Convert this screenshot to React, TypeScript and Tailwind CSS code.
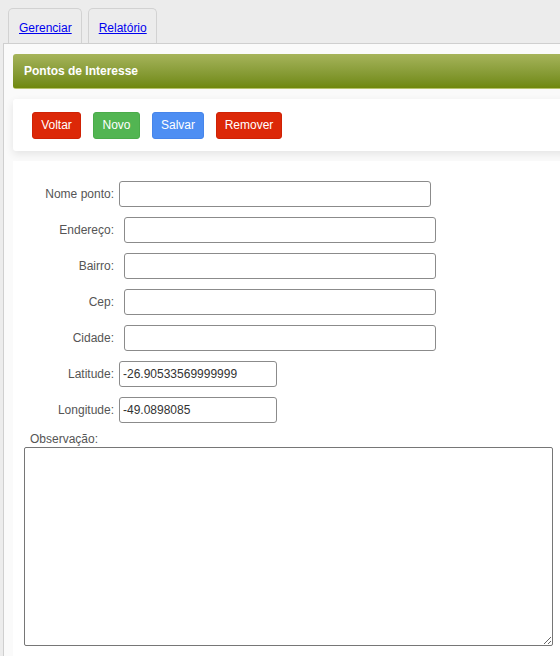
import React from "react";

type Field = { label: string; gap: "near" | "far"; width: number; value?: string };

const fields: Field[] = [
  { label: "Nome ponto:", gap: "near", width: 312 },
  { label: "Endereço:", gap: "far", width: 312 },
  { label: "Bairro:", gap: "far", width: 312 },
  { label: "Cep:", gap: "far", width: 312 },
  { label: "Cidade:", gap: "far", width: 312 },
  { label: "Latitude:", gap: "near", width: 158, value: "-26.90533569999999" },
  { label: "Longitude:", gap: "near", width: 158, value: "-49.0898085" },
];

function Tab({ children }: { children: React.ReactNode }) {
  return (
    <div className="h-[35px] border border-b-0 border-[#d2d2d2] rounded-t-[5px] pl-[10px] pr-[9px] pt-[10px] bg-[#ececec]">
      <a href="#" className="text-[#0000ee] underline leading-[14px]">
        {children}
      </a>
    </div>
  );
}

function ActionButton({
  label,
  tone,
  width,
}: {
  label: string;
  tone: "red" | "green" | "blue";
  width: string;
}) {
  const toneClass =
    tone === "red"
      ? "bg-[#dc2808] border-[#cf2205]"
      : tone === "green"
      ? "bg-[#52b552] border-[#4aab4a]"
      : "bg-[#4d8ef3] border-[#4685ea]";
  return (
    <button
      type="button"
      className={`h-[27px] ${width} rounded-[3px] border text-white text-[12px] leading-none ${toneClass}`}
    >
      {label}
    </button>
  );
}

export default function App() {
  return (
    <div className="w-[560px] h-[656px] overflow-hidden bg-[#ececec] font-['Liberation_Sans',Arial,sans-serif] text-[12px]">
      <div className="flex gap-[6px] pl-[8px] pt-[8px]">
        <Tab>Gerenciar</Tab>
        <Tab>Relatório</Tab>
      </div>

      <div className="ml-[3px] w-[640px] border-l border-t border-[#cfcfcf] bg-[#fafafa] pt-[10px] pl-[9px]">
        <div className="h-[35px] rounded-[3px] bg-gradient-to-b from-[#a6b45a] to-[#6f880b] border-b border-[#b6c26c] flex items-center pl-[11px]">
          <span className="text-white font-bold text-[12px]">Pontos de Interesse</span>
        </div>

        <div className="mt-[10px] h-[52px] bg-white rounded-[3px] shadow-[0_3px_8px_rgba(0,0,0,0.09)] flex items-center gap-[12px] pl-[19px]">
          <ActionButton label="Voltar" tone="red" width="w-[49px]" />
          <ActionButton label="Novo" tone="green" width="w-[47px]" />
          <ActionButton label="Salvar" tone="blue" width="w-[52px]" />
          <ActionButton label="Remover" tone="red" width="w-[66px]" />
        </div>

        <div className="mt-[10px] bg-white pt-[20px] pb-[20px]">
          <div className="flex flex-col gap-[10px]">
            {fields.map((f) => (
              <div key={f.label} className="flex items-center h-[26px]">
                <label className="w-[101px] text-right text-[#555555]">{f.label}</label>
                <input
                  type="text"
                  defaultValue={f.value ?? ""}
                  style={{ width: f.width }}
                  className={`h-[26px] border border-[#8b8b8b] rounded-[3px] px-[3px] text-[12px] text-[#333333] bg-white outline-none ${
                    f.gap === "near" ? "ml-[5px]" : "ml-[10px]"
                  }`}
                />
              </div>
            ))}
          </div>

          <div className="mt-[9px] pl-[17px] leading-[15px] text-[#555555]">Observação:</div>
          <textarea className="block ml-[11px] w-[529px] h-[199px] border border-[#767676] rounded-[2px] bg-white outline-none p-[2px] text-[12px]" />
        </div>
      </div>
    </div>
  );
}
